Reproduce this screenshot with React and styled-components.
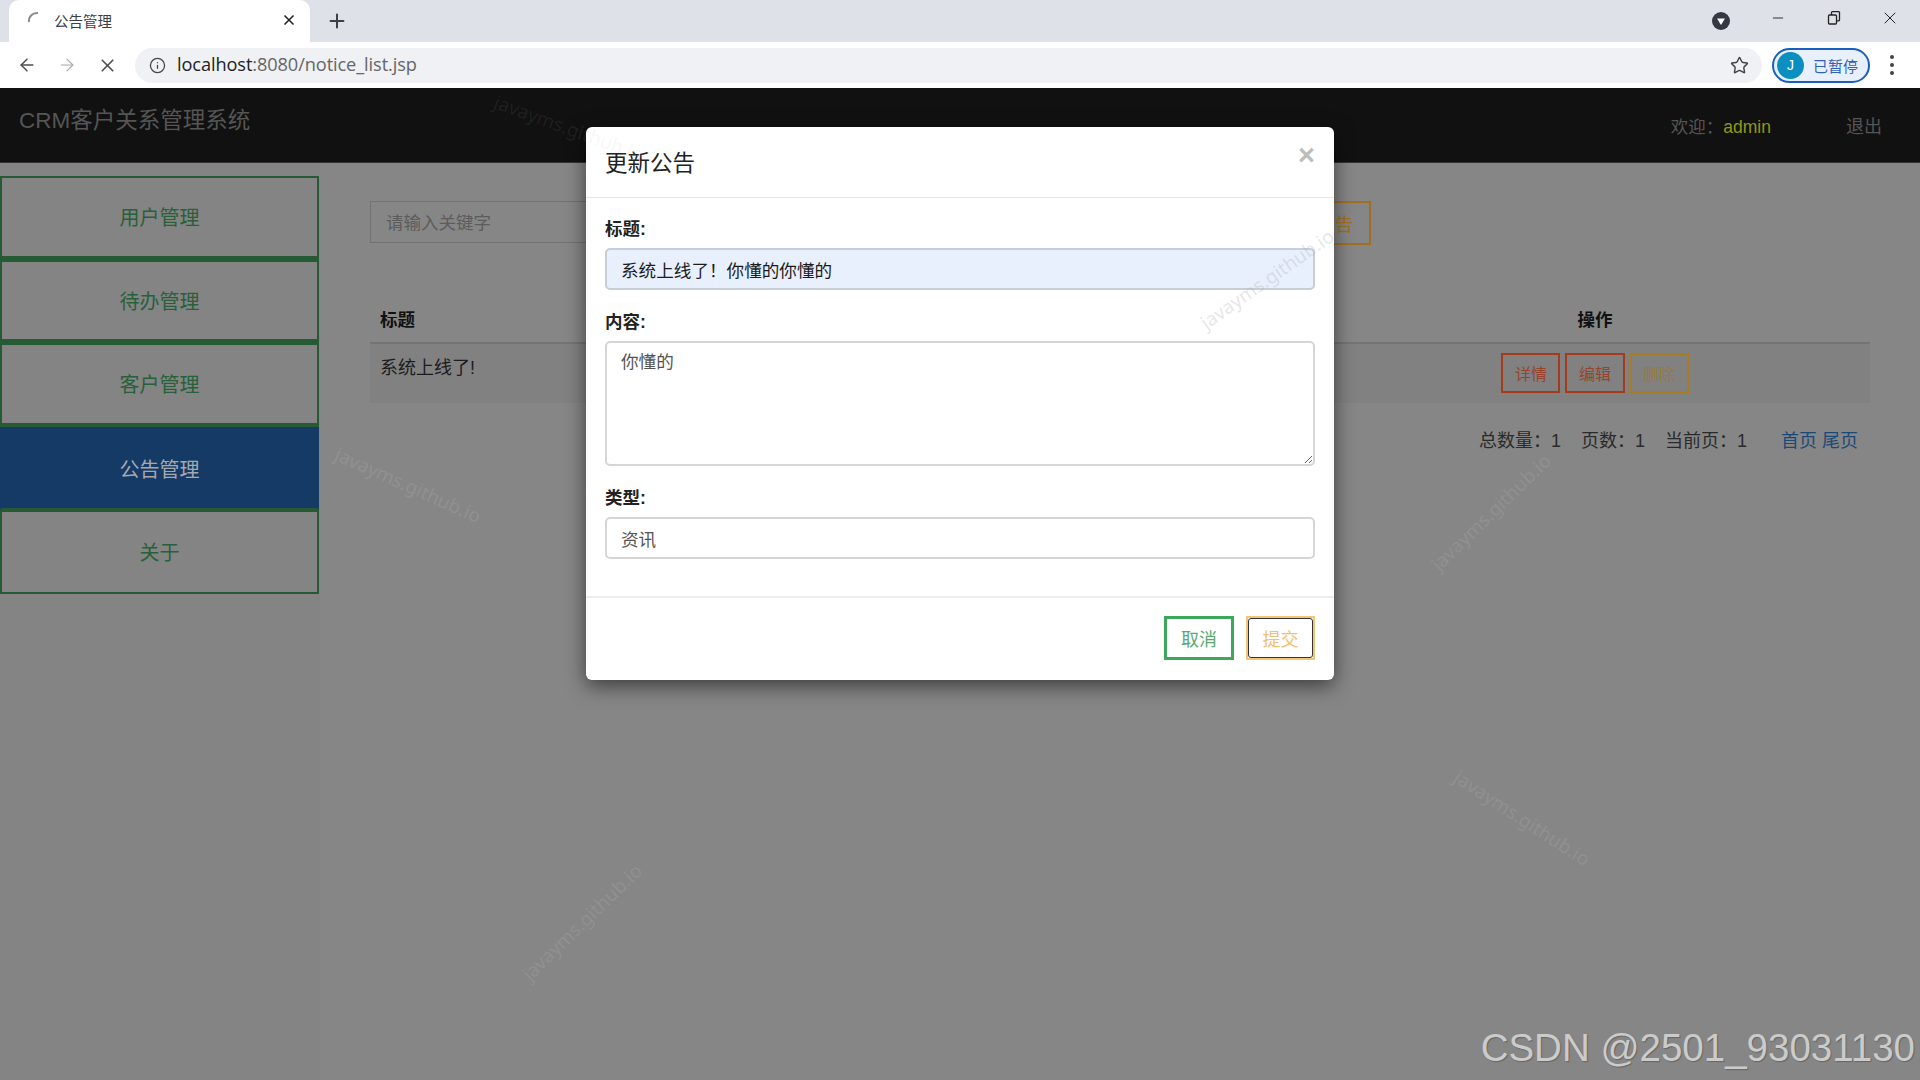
import React from 'react'
import styled, { createGlobalStyle } from 'styled-components'
import { ArrowLeft, ArrowRight, X, Plus, Info, Star, Minus } from 'lucide-react'

const GlobalStyle = createGlobalStyle`
html,body{margin:0;padding:0;background:#858585;}
*{box-sizing:border-box;}
body{font-family:"Liberation Sans","Noto Sans CJK SC",sans-serif;}
`

const Screen = styled.div`
position:relative;
width:1920px;
height:1080px;
overflow:hidden;
display:flex;
flex-direction:column;
`

const TabStrip = styled.div`
height:42px;
background:#dee1e8;
display:flex;
align-items:center;
padding-left:9px;
`
const Tab = styled.div`
width:301px;
height:42px;
background:#fff;
border-radius:10px 10px 0 0;
display:flex;
align-items:center;
padding:0 13px 2px 16px;
gap:9px;
color:#3c4043;
font-size:14.5px;
`
const TabTitle = styled.span`
flex:1;
`
const NewTab = styled.div`
margin-left:16px;
color:#3c4043;
display:flex;
`
const WindowControls = styled.div`
margin-left:auto;
display:flex;
align-items:center;
height:42px;
padding-right:2px;
color:#222;
`
const WinBtn = styled.div`
width:56px;
display:flex;
justify-content:center;
margin-top:-6px;
`
const MediaIcon = styled.div`
margin-right:20px;
display:flex;
`

const ToolBar = styled.div`
height:46px;
background:#fff;
display:flex;
align-items:center;
padding-left:17px;
`
const NavIcons = styled.div`
display:flex;
align-items:center;
gap:20px;
color:#4a4d52;
margin-right:17px;
`
const Omnibox = styled.div`
width:1627px;
height:35px;
border-radius:18px;
background:#eff1f4;
display:flex;
align-items:center;
padding:0 13px 0 14px;
gap:11px;
color:#444;
`
const Url = styled.div`
flex:1;
font-family:"Open Sans","Liberation Sans",sans-serif;
font-size:18.2px;
color:#666;
letter-spacing:-.1px;
margin-top:-2px;
b{font-weight:400;color:#222;}
`
const Profile = styled.div`
margin-left:10px;
width:98px;
height:35px;
border:2px solid #1a5fc0;
border-radius:18px;
background:#e8f0fe;
display:flex;
align-items:center;
padding-left:3px;
gap:9px;
color:#2f62b8;
font-size:15px;
`
const Avatar = styled.div`
width:27px;
height:27px;
border-radius:50%;
background:#0b8fc0;
color:#fff;
display:flex;
align-items:center;
justify-content:center;
font-size:14px;
`
const Dots = styled.div`
margin-left:20px;
display:flex;
flex-direction:column;
gap:4px;
i{display:block;width:4px;height:4px;border-radius:50%;background:#444;}
`

const Header = styled.div`
height:75px;
background:#111;
display:flex;
align-items:center;
padding:0 38px 0 19px;
border-bottom:1px solid #333;
color:#555;
font-size:17.5px;
`
const Brand = styled.div`
font-size:22.5px;
flex:1;
margin-top:-15px;
`
const Admin = styled.span`
color:#8f9a12;
`
const Logout = styled.span`
margin-left:75px;
font-size:18px;
`

const Body = styled.div`
flex:1;
display:flex;
background:#868686;
`
const Sidebar = styled.div`
width:320px;
background:#848484;
padding-top:13px;
`
const NavItem = styled.div`
width:319px;
height:83.5px;
display:flex;
align-items:center;
justify-content:center;
font-size:20px;
color:${p => (p.$active ? '#a5a9ae' : '#28603a')};
background:${p => (p.$active ? '#163a66' : 'transparent')};
border:2px solid ${p => (p.$active ? '#163a66' : '#265a35')};
border-bottom:${p => (p.$thin ? 2 : 4)}px solid #265a35;
`
const Main = styled.div`
flex:1;
padding:38px 50px 0;
`
const SearchRow = styled.div`
width:1001px;
display:flex;
justify-content:space-between;
align-items:center;
`
const SearchGroup = styled.div`
display:flex;
gap:10px;
`
const SearchInput = styled.div`
width:500px;
height:42px;
border:1px solid #727272;
display:flex;
align-items:center;
padding:0 0 2px 15px;
font-size:17.5px;
color:#5c5c5c;
`
const OutlineBtn = styled.div`
height:${p => p.$h || 44}px;
padding:0 ${p => p.$px || 16}px;
display:flex;
align-items:center;
justify-content:center;
border:${p => p.$bw || 2}px solid ${p => p.$c};
color:${p => p.$t || p.$c};
font-size:${p => p.$fs || 18}px;
`
const Table = styled.table`
width:1500px;
margin-top:54px;
border-collapse:collapse;
table-layout:fixed;
font-size:18px;
color:#1c1c1c;
th{
  height:44px;
  text-align:left;
  padding:0 10px 5px;
  font-size:17.5px;
  color:#111;
  border-bottom:2px solid #747474;
}
td{
  height:60px;
  background:#818181;
  padding:9px 10px 0;
  vertical-align:top;
}
`
const ActionCol = styled.th`
&&{text-align:center;}
`
const Actions = styled.div`
display:flex;
justify-content:center;
gap:5px;
`
const Pager = styled.div`
display:flex;
justify-content:flex-end;
align-items:center;
margin-top:26px;
padding-right:12px;
gap:20px;
font-size:18px;
color:#2a2a2a;
line-height:24px;
`
const PagerLinks = styled.div`
margin-left:14px;
color:#1c4877;
`

const Backdrop = styled.div`
position:absolute;
left:0;
right:0;
top:88px;
bottom:0;
display:flex;
justify-content:center;
align-items:flex-start;
padding-top:39px;
`
const Modal = styled.div`
width:748px;
height:553px;
background:#fff;
border-radius:6px;
box-shadow:0 6px 20px rgba(0,0,0,.55);
display:flex;
flex-direction:column;
`
const ModalHead = styled.div`
height:71px;
border-bottom:1px solid #e5e5e5;
padding:0 19px;
display:flex;
align-items:flex-start;
justify-content:space-between;
`
const ModalTitle = styled.div`
font-size:22.5px;
color:#222;
margin-top:18px;
`
const CloseMark = styled.div`
font-size:29px;
font-weight:700;
color:#bdbdbd;
margin-top:12px;
`
const ModalBody = styled.div`
flex:1;
padding:19px 19px 0;
`
const Field = styled.div`
margin-bottom:20px;
`
const Label = styled.label`
display:block;
height:24px;
line-height:25px;
margin-bottom:7px;
font-size:17.5px;
font-weight:700;
color:#222;
`
const InputText = styled.input`
display:block;
width:100%;
height:42px;
padding:0 14px;
border:2px solid ${p => (p.$filled ? '#c9cdd6' : '#d6d6d6')};
border-radius:5px;
background:${p => (p.$filled ? '#e8f0fe' : '#fff')};
color:${p => (p.$filled ? '#1c1c1c' : '#555')};
font:17.6px "Liberation Sans","Noto Sans CJK SC",sans-serif;
outline:none;
`
const AreaText = styled.textarea`
display:block;
width:100%;
height:125px;
padding:5px 14px;
border:2px solid #d6d6d6;
border-radius:5px;
color:#555;
font:17.6px "Liberation Sans","Noto Sans CJK SC",sans-serif;
outline:none;
resize:vertical;
`
const ModalFoot = styled.div`
height:84px;
border-top:2px solid #eee;
padding:18px 19px 0;
display:flex;
justify-content:flex-end;
gap:12px;
`
const FocusBtn = styled.div`
width:69px;
height:44px;
border:2px solid #f3c577;
display:flex;
position:relative;
align-items:center;
justify-content:center;
color:#f0c070;
font-size:18px;
&::after{
  content:"";
  position:absolute;
  inset:0;
  border:1px solid #333;
  border-radius:3px;
}
`

const Watermark = styled.div`
position:absolute;
left:${p => p.$x}px;
top:${p => p.$y}px;
transform:translate(-50%,-50%) rotate(${p => p.$r}deg);
font-family:"Noto Sans",sans-serif;
font-size:19px;
white-space:nowrap;
color:rgba(170,170,170,${p => p.$a});
pointer-events:none;
`
const CsdnMark = styled.div`
position:absolute;
right:5px;
bottom:10px;
font-size:38.5px;
color:#cbcbcb;
text-shadow:1px 1px 1px #666;
`

const marks = [
  { x: 408, y: 485, r: 24, a: 0.3 },
  { x: 1491, y: 512, r: -44, a: 0.3 },
  { x: 1522, y: 818, r: 33, a: 0.3 },
  { x: 582, y: 922, r: -44, a: 0.3 },
  { x: 1267, y: 279, r: -35, a: 0.3 },
  { x: 569, y: 128, r: 20, a: 0.1 },
]
const navs = ['用户管理', '待办管理', '客户管理', '公告管理', '关于']

export default function App() {
  return (
    <Screen>
      <GlobalStyle />
      <TabStrip>
        <Tab>
          <svg width="20" height="20" viewBox="0 0 20 20" fill="none">
            <path d="M4 12 A8 8 0 0 1 13 3" stroke="#8a8d91" strokeWidth="2" />
          </svg>
          <TabTitle>公告管理</TabTitle>
          <X size={16} strokeWidth={2.5} color="#222" />
        </Tab>
        <NewTab><Plus size={22} strokeWidth={2.2} /></NewTab>
        <WindowControls>
          <MediaIcon>
            <svg width="18" height="18" viewBox="0 0 18 18">
              <circle cx="9" cy="9" r="9" fill="#333842" />
              <path d="M5 6.5h8L9 13z" fill="#fff" />
            </svg>
          </MediaIcon>
          <WinBtn><Minus size={16} strokeWidth={1.4} /></WinBtn>
          <WinBtn>
            <svg width="16" height="16" viewBox="0 0 16 16" fill="none" stroke="#222" strokeWidth="1.3">
              <rect x="2.5" y="5" width="8" height="9" rx="1" />
              <path d="M5.5 5V2.5a.8.8 0 0 1 .8-.8h6.4a.8.8 0 0 1 .8.8V10a.8.8 0 0 1-.8.8h-2.2" />
            </svg>
          </WinBtn>
          <WinBtn><X size={20} strokeWidth={1.2} /></WinBtn>
        </WindowControls>
      </TabStrip>
      <ToolBar>
        <NavIcons>
          <ArrowLeft size={20} strokeWidth={1.8} />
          <ArrowRight size={20} strokeWidth={1.4} color="#aaa" />
          <X size={21} strokeWidth={1.9} />
        </NavIcons>
        <Omnibox>
          <Info size={17} strokeWidth={1.8} />
          <Url><b>localhost</b>:8080/notice_list.jsp</Url>
          <Star size={19} strokeWidth={1.8} />
        </Omnibox>
        <Profile>
          <Avatar>J</Avatar>
          已暂停
        </Profile>
        <Dots><i /><i /><i /></Dots>
      </ToolBar>
      <Header>
        <Brand>CRM客户关系管理系统</Brand>
        <span>{'欢迎\uFF1A'}<Admin>admin</Admin></span>
        <Logout>退出</Logout>
      </Header>
      <Body>
        <Sidebar>
          {navs.map((n, i) => (
            <NavItem key={n} $active={i === 3} $thin={i >= 3}>{n}</NavItem>
          ))}
        </Sidebar>
        <Main>
          <SearchRow>
            <SearchGroup>
              <SearchInput>请输入关键字</SearchInput>
              <OutlineBtn $c="#a07020">搜索</OutlineBtn>
            </SearchGroup>
            <OutlineBtn $c="#a07020">新增公告</OutlineBtn>
          </SearchRow>
          <Table>
            <colgroup>
              <col width="320" />
              <col width="400" />
              <col width="230" />
              <col width="550" />
            </colgroup>
            <thead>
              <tr>
                <th>标题</th>
                <th>内容</th>
                <th>类型</th>
                <ActionCol>操作</ActionCol>
              </tr>
            </thead>
            <tbody>
              <tr>
                <td>系统上线了!</td>
                <td>你懂的</td>
                <td>资讯</td>
                <td>
                  <Actions>
                    <OutlineBtn $h={40} $px={11.5} $fs={16} $bw={2.5} $c="#a83a1c" $t="#96452c">详情</OutlineBtn>
                    <OutlineBtn $h={40} $px={11.5} $fs={16} $bw={2.5} $c="#a83a1c" $t="#96452c">编辑</OutlineBtn>
                    <OutlineBtn $h={40} $px={11.5} $fs={16} $bw={2.5} $c="#a87c24" $t="#9a7a3a">删除</OutlineBtn>
                  </Actions>
                </td>
              </tr>
            </tbody>
          </Table>
          <Pager>
            <span>{'总数量\uFF1A1'}</span>
            <span>{'页数\uFF1A1'}</span>
            <span>{'当前页\uFF1A1'}</span>
            <PagerLinks>首页 尾页</PagerLinks>
          </Pager>
        </Main>
      </Body>
      <Backdrop>
        <Modal>
          <ModalHead>
            <ModalTitle>更新公告</ModalTitle>
            <CloseMark>×</CloseMark>
          </ModalHead>
          <ModalBody>
            <Field>
              <Label>标题:</Label>
              <InputText $filled defaultValue={'系统上线了\uFF01你懂的你懂的'} />
            </Field>
            <Field>
              <Label>内容:</Label>
              <AreaText defaultValue="你懂的" />
            </Field>
            <Field>
              <Label>类型:</Label>
              <InputText defaultValue="资讯" />
            </Field>
          </ModalBody>
          <ModalFoot>
            <OutlineBtn $px={14} $bw={3} $c="#3da75a" $t="#5aaa6e">取消</OutlineBtn>
            <FocusBtn>提交</FocusBtn>
          </ModalFoot>
        </Modal>
      </Backdrop>
      {marks.map(m => (
        <Watermark key={m.x} $x={m.x} $y={m.y} $r={m.r} $a={m.a}>javayms.github.io</Watermark>
      ))}
      <CsdnMark>CSDN @2501_93031130</CsdnMark>
    </Screen>
  )
}
